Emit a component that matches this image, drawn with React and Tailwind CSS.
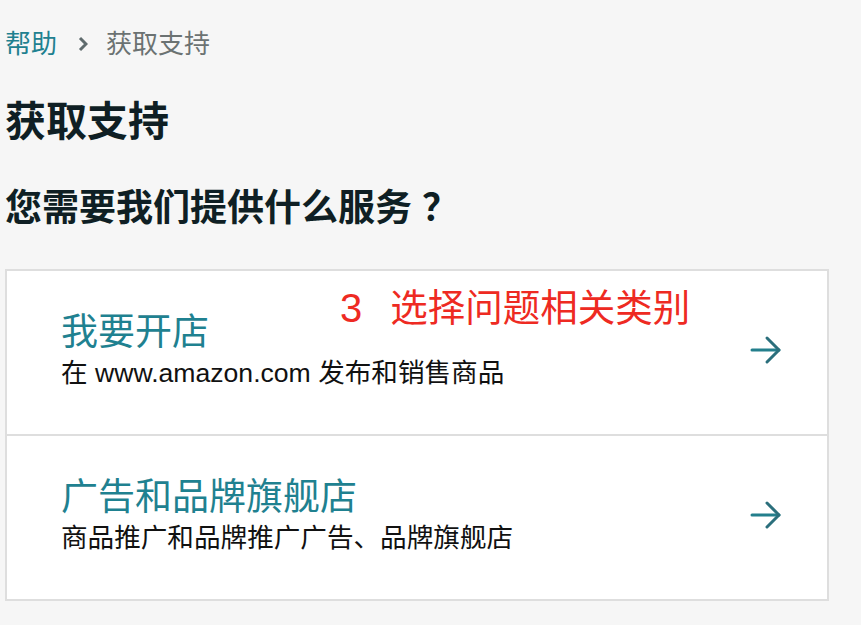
import React from 'react';

const font = { fontFamily: '"Liberation Sans", "Noto Sans CJK SC", sans-serif' };

function Arrow() {
  return (
    <svg width="32" height="30" viewBox="0 0 32 30" fill="none" className="shrink-0">
      <path d="M2 15 H29" stroke="#237f8c" strokeWidth="3" strokeLinecap="round" />
      <path d="M17 3 L29 15 L17 27" stroke="#2b6f7c" strokeWidth="3" strokeLinecap="round" strokeLinejoin="round" />
    </svg>
  );
}

function Option({ title, desc, last }) {
  return (
    <div
      className={`flex items-center justify-between pl-[54px] pr-[45px] pt-[40px] pb-[45px] ${
        last ? '' : 'border-b-2 border-[#dedede]'
      }`}
    >
      <div className="flex flex-col">
        <span className="text-[37px] leading-[44px] text-[#1f8190]">{title}</span>
        <span className="mt-[2px] text-[26.6px] leading-[32px] text-[#111111]">{desc}</span>
      </div>
      <Arrow />
    </div>
  );
}

export default function App() {
  return (
    <div className="min-h-[625px] w-full bg-[#f6f6f6] pl-[5px] pt-[28px] pb-[24px]" style={font}>
      <nav className="flex items-center text-[26px] leading-[32px]">
        <span className="text-[#1f8190]">帮助</span>
        <svg width="10" height="16" viewBox="0 0 10 16" className="ml-[21px] mr-[18px]">
          <path d="M2 2 L8 8 L2 14" stroke="#5f6b6d" strokeWidth="3" fill="none" />
        </svg>
        <span className="text-[#6b7272]">获取支持</span>
      </nav>

      <h1 className="mt-[37px] text-[41px] leading-[50px] font-bold text-[#0f1f24]">获取支持</h1>
      <h2 className="mt-[40px] text-[37px] leading-[44px] font-bold text-[#0f1f24]">
        您需要我们提供什么服务<span className="ml-[10px]">？</span>
      </h2>

      <div className="relative mt-[38px] w-[824px] border-2 border-[#dedede] bg-white">
        <Option title="我要开店" desc="在 www.amazon.com 发布和销售商品" />
        <Option title="广告和品牌旗舰店" desc="商品推广和品牌推广广告、品牌旗舰店" last />
        <div className="absolute left-[333px] top-[15px] flex items-center leading-[44px] text-[#ee2a22]">
          <span className="text-[40px]">3</span>
          <span className="ml-[28px] text-[37.5px]">选择问题相关类别</span>
        </div>
      </div>
    </div>
  );
}
